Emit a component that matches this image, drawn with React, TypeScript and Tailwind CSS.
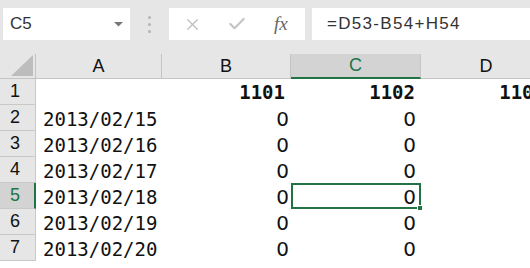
import { X, Check } from "lucide-react";

const mono = { fontFamily: '"DejaVu Sans Mono", "Noto Sans CJK JP", monospace' };
const sans = { fontFamily: '"Liberation Sans", Arial, sans-serif' };
const num = { fontFamily: '"DejaVu Sans", "Liberation Sans", sans-serif' };

const dates = ["2013/02/15", "2013/02/16", "2013/02/17", "2013/02/18", "2013/02/19", "2013/02/20"];

const App = () => {
  return (
    <div className="w-[530px] h-[268px] overflow-hidden bg-white text-[#111]" style={sans}>
      {/* FORMULA BAR */}
      <div className="h-[54px] bg-[#e6e6e6] flex items-start pt-[8px]">
        <div className="ml-[3px] w-[127px] h-[32px] bg-white flex items-center justify-between pl-[7px] pr-[7px] shrink-0">
          <span className="text-[17px] text-[#333]">C5</span>
          <svg width="9" height="5" viewBox="0 0 9 5">
            <polygon points="0,0 9,0 4.5,4.5" fill="#777" />
          </svg>
        </div>
        <div className="w-[39px] h-[32px] flex flex-col items-center justify-center gap-[4px] shrink-0">
          <span className="w-[3px] h-[3px] rounded-full bg-[#b5b5b5]" />
          <span className="w-[3px] h-[3px] rounded-full bg-[#b5b5b5]" />
          <span className="w-[3px] h-[3px] rounded-full bg-[#b5b5b5]" />
        </div>
        <div className="w-[136px] h-[32px] bg-white flex items-center shrink-0">
          <X size={19} strokeWidth={1.6} className="text-[#bdbdbd] ml-[14px]" />
          <Check size={20} strokeWidth={2.6} className="text-[#c4c4c4] ml-[25px]" />
          <span
            className="ml-[27px] text-[19px] italic text-[#666]"
            style={{ fontFamily: '"Liberation Serif", "Times New Roman", serif' }}
          >
            fx
          </span>
        </div>
        <div className="ml-[7px] flex-1 h-[32px] bg-white flex items-center pl-[15px]">
          <span className="text-[17px] text-[#333] tracking-[1.3px]">=D53-B54+H54</span>
        </div>
      </div>

      {/* COLUMN HEADERS */}
      <div className="flex h-[25px] bg-[#e6e6e6]">
        <div className="w-[36px] shrink-0 border-r border-b border-[#c4c4c4] flex items-end justify-end pr-[1px] pb-[1px]">
          <svg width="23" height="22" viewBox="0 0 23 22">
            <polygon points="22,0 22,21 0,21" fill="#bdbdbd" />
          </svg>
        </div>
        <div className="w-[126px] shrink-0 border-r border-b border-[#c4c4c4] flex items-center justify-center text-[18px]">A</div>
        <div className="w-[129px] shrink-0 border-r border-b border-[#c4c4c4] flex items-center justify-center text-[18px]">B</div>
        <div className="w-[130px] shrink-0 bg-[#d3d3d3] border-r border-[#c4c4c4] border-b-2 border-b-[#217346] flex items-center justify-center text-[18px] text-[#217346]">C</div>
        <div className="w-[130px] shrink-0 border-b border-[#c4c4c4] flex items-center justify-center text-[18px]">D</div>
      </div>

      {/* ROW 1 */}
      <div className="flex h-[26px]">
        <div className="w-[36px] shrink-0 bg-[#e6e6e6] border-r border-b border-[#c8c8c8] flex items-center pl-[10px] text-[18px]">1</div>
        <div className="w-[126px] shrink-0" />
        <div className="w-[129px] shrink-0 flex items-center justify-end pr-[6px] text-[19px] font-bold" style={mono}>1101</div>
        <div className="w-[130px] shrink-0 flex items-center justify-end pr-[6px] text-[19px] font-bold" style={mono}>1102</div>
        <div className="w-[130px] shrink-0 flex items-center justify-end pr-[6px] text-[19px] font-bold" style={mono}>1103</div>
      </div>

      {/* DATA ROWS */}
      {dates.map((d, i) => {
        const n = i + 2;
        const active = n === 5;
        return (
          <div key={d} className="flex h-[26px]">
            <div
              className={
                active
                  ? "w-[36px] shrink-0 bg-[#d3d3d3] border-r-2 border-r-[#217346] border-b border-b-[#c8c8c8] flex items-center pl-[10px] text-[18px] text-[#217346]"
                  : "w-[36px] shrink-0 bg-[#e6e6e6] border-r border-b border-[#c8c8c8] flex items-center pl-[10px] text-[18px]"
              }
            >
              {n}
            </div>
            <div className="w-[126px] shrink-0 flex items-center pl-[7px] pt-[2px] text-[19px]" style={mono}>{d}</div>
            <div className="w-[129px] shrink-0 flex items-center justify-end pr-[2px] pt-[2px] text-[20px]" style={num}>0</div>
            <div
              className={
                active
                  ? "relative w-[130px] shrink-0 border-2 border-[#217346] flex items-center justify-end pr-[3px] pt-[2px] text-[20px]"
                  : "w-[130px] shrink-0 flex items-center justify-end pr-[5px] pt-[2px] text-[20px]"
              }
              style={num}
            >
              0
              {active && (
                <span className="absolute right-[-4px] bottom-[-4px] w-[6px] h-[6px] bg-[#217346] border border-white" />
              )}
            </div>
            <div className="w-[130px] shrink-0" />
          </div>
        );
      })}
    </div>
  );
};

export default App;
